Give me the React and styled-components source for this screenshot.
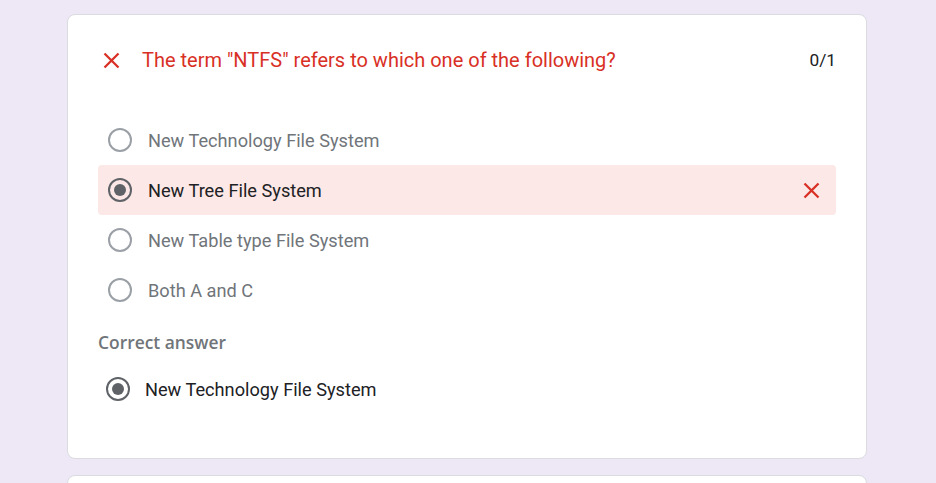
import React from "react";
import styled, { createGlobalStyle } from "styled-components";

const Global = createGlobalStyle`
  html, body { margin: 0; padding: 0; background: #ede7f6; }
  body { font-family: Roboto, "Noto Sans", Arial, sans-serif; }
`;

const Page = styled.div`
  display: flex;
  flex-direction: column;
  align-items: flex-start;
  gap: 16px;
  padding: 14px 0 0 67px;
  height: 483px;
  box-sizing: border-box;
  overflow: hidden;
`;

const Card = styled.div`
  width: 800px;
  box-sizing: border-box;
  background: #fff;
  border: 1px solid #dadce0;
  border-radius: 8px;
  padding: ${(p) => p.$pad || "0"};
  min-height: ${(p) => p.$minH || "0"};
  flex-shrink: 0;
`;

const Header = styled.div`
  display: flex;
  align-items: center;
  height: 32px;
  margin-top: 29px;
  padding: 0 0 0 5px;
`;

const Title = styled.div`
  flex: 1;
  margin-left: 22px;
  font-size: 20px;
  color: #d93025;
`;

const Score = styled.div`
  font-size: 17.3px;
  color: #202124;
`;

const Options = styled.div`
  display: flex;
  flex-direction: column;
  margin-top: 39px;
`;

const OptionRow = styled.div`
  display: flex;
  align-items: center;
  height: 50px;
  padding: 0 16px 0 10px;
  border-radius: 4px;
  background: ${(p) => (p.$wrong ? "#fce8e6" : "transparent")};
`;

const Radio = styled.span`
  width: 24px;
  height: 24px;
  box-sizing: border-box;
  border-radius: 50%;
  border: 2px solid ${(p) => (p.$checked ? "#5f6368" : "#9aa0a6")};
  display: flex;
  align-items: center;
  justify-content: center;
  flex-shrink: 0;
  &::after {
    content: "";
    display: ${(p) => (p.$checked ? "block" : "none")};
    width: 12px;
    height: 12px;
    border-radius: 50%;
    background: #5f6368;
  }
`;

const OptionText = styled.span`
  flex: 1;
  margin-left: ${(p) => p.$gap || "16px"};
  font-size: 18.2px;
  color: ${(p) => (p.$dark ? "#202124" : "#70757a")};
`;

const SectionLabel = styled.div`
  margin-top: 15px;
  height: 24px;
  line-height: 24px;
  font-family: "Open Sans", Roboto, sans-serif;
  font-weight: 600;
  font-size: 17.4px;
  color: #70757a;
`;

const CorrectRow = styled.div`
  display: flex;
  align-items: center;
  height: 24px;
  margin-top: 23px;
  padding-left: 8px;
`;

const Cross = ({ size = 17 }) => (
  <svg width={size} height={size} viewBox="0 0 17 17" aria-hidden="true">
    <path d="M1.5 1.5 L15.5 15.5 M15.5 1.5 L1.5 15.5" stroke="#d93025" strokeWidth="2.3" fill="none" />
  </svg>
);

const options = [
  { text: "New Technology File System" },
  { text: "New Tree File System", checked: true, wrong: true },
  { text: "New Table type File System" },
  { text: "Both A and C" },
];

export default function App() {
  return (
    <>
      <Global />
      <Page>
        <Card $pad="0 30px 0 30px" $minH="445px">
          <Header>
            <Cross />
            <Title>The term "NTFS" refers to which one of the following?</Title>
            <Score>0/1</Score>
          </Header>
          <Options>
            {options.map((o) => (
              <OptionRow key={o.text} $wrong={o.wrong}>
                <Radio $checked={o.checked} />
                <OptionText $dark={o.checked}>{o.text}</OptionText>
                {o.wrong && <Cross />}
              </OptionRow>
            ))}
          </Options>
          <SectionLabel>Correct answer</SectionLabel>
          <CorrectRow>
            <Radio $checked />
            <OptionText $dark $gap="15px">New Technology File System</OptionText>
          </CorrectRow>
        </Card>
        <Card $minH="60px" />
      </Page>
    </>
  );
}
